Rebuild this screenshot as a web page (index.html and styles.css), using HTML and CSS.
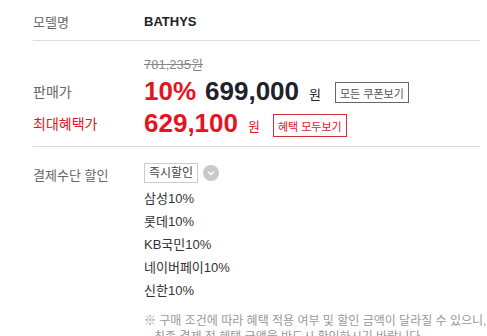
FILE: index.html
```html
<!DOCTYPE html>
<html lang="ko">
<head>
    <meta charset="UTF-8">
    <meta name="viewport" content="width=device-width, initial-scale=1.0">
    <title>상품 정보</title>
    <link rel="stylesheet" href="styles.css">
</head>
<body>
    <div class="info-container">
        <!-- 모델명 -->
        <div class="info-row model-row">
            <div class="info-label">모델명</div>
            <div class="info-value model-name">BATHYS</div>
        </div>

        <!-- 가격 정보 -->
        <div class="price-section">
            <div class="info-row">
                <div class="info-label"></div>
                <div class="info-value origin-price">781,235원</div>
            </div>
            <div class="info-row price-row">
                <div class="info-label">판매가</div>
                <div class="info-value">
                    <span class="rate">10%</span>
                    <span class="sale-price">699,000</span>
                    <span class="won">원</span>
                    <button class="outline-btn">모든 쿠폰보기</button>
                </div>
            </div>
            <div class="info-row price-row benefit-row">
                <div class="info-label">최대혜택가</div>
                <div class="info-value">
                    <span class="benefit-price">629,100</span>
                    <span class="won">원</span>
                    <button class="outline-btn red-btn">혜택 모두보기</button>
                </div>
            </div>
        </div>

        <!-- 결제수단 할인 -->
        <div class="pay-section">
            <div class="info-row">
                <div class="info-label">결제수단 할인</div>
                <div class="info-value">
                    <div class="pay-select">
                        <span class="pay-tag">즉시할인</span>
                        <span class="toggle-icon">
                            <svg width="16" height="16" viewBox="0 0 16 16">
                                <circle cx="8" cy="8" r="8" fill="#c9c9c9"/>
                                <path d="M5 6.8 L8 9.6 L11 6.8" fill="none" stroke="#fff" stroke-width="1.4"/>
                            </svg>
                        </span>
                    </div>
                    <ul class="card-list">
                        <li>삼성10%</li>
                        <li>롯데10%</li>
                        <li>KB국민10%</li>
                        <li>네이버페이10%</li>
                        <li>신한10%</li>
                    </ul>
                    <p class="notice">※ 구매 조건에 따라 혜택 적용 여부 및 할인 금액이 달라질 수 있으니,<br>&nbsp;&nbsp;&nbsp;최종 결제 전 혜택 금액을 반드시 확인하시기 바랍니다.</p>
                </div>
            </div>
        </div>
    </div>
</body>
</html>
```

FILE: styles.css
```css
body {
    font-family: "Liberation Sans", "Noto Sans CJK KR", sans-serif;
    background-color: #fff;
    margin: 0;
    color: #333;
    overflow: hidden;
}

.info-container {
    width: 447px;
    margin-left: 33px;
}

.info-row {
    display: flex;
    align-items: center;
}

.info-label {
    width: 111px;
    flex-shrink: 0;
    font-size: 13px;
    color: #666;
}

.info-value {
    flex: 1;
    font-size: 13px;
}

/* 모델명 */
.model-row {
    height: 41px;
    padding-top: 2px;
    box-sizing: border-box;
    border-bottom: 1px solid #ddd;
}

.model-name {
    font-weight: bold;
    color: #222;
    font-size: 13px;
}

/* 가격 */
.price-section {
    padding-top: 15px;
    height: 106px;
    box-sizing: border-box;
    border-bottom: 1px solid #ddd;
}

.origin-price {
    font-size: 13px;
    color: #888;
    text-decoration: line-through;
    line-height: 18px;
}

.price-row {
    height: 32px;
    margin-top: 1px;
}

.benefit-row {
    margin-top: 0;
}

.price-row .info-value {
    display: flex;
    align-items: center;
}

.rate, .sale-price, .benefit-price {
    font-size: 26px;
    font-weight: bold;
    line-height: 30px;
}

.rate {
    color: #e5141e;
    margin-right: 9px;
}

.sale-price {
    color: #1e222b;
}

.benefit-price {
    color: #e5141e;
}

.won {
    font-size: 13px;
    color: #222;
    margin: 4px 14px 0 10px;
}

.benefit-row .won {
    color: #e5141e;
    margin-right: 13px;
}

.benefit-row .info-label {
    color: #e5141e;
    font-size: 14px;
}

.price-row .info-label {
    font-size: 14px;
}

.outline-btn {
    font-family: inherit;
    font-size: 11px;
    color: #555;
    background: #fff;
    border: 1px solid #666;
    padding: 2px 4px;
    height: 21px;
    margin-top: 3px;
    cursor: pointer;
}

.red-btn {
    color: #e5141e;
    border-color: #d0303a;
    height: 23px;
    margin-top: 5px;
}

/* 결제수단 할인 */
.pay-section {
    padding-top: 16px;
}

.pay-section .info-row {
    align-items: flex-start;
}

.pay-section .info-label {
    font-size: 13px;
    margin-top: 2px;
}

.pay-select {
    display: flex;
    align-items: center;
    gap: 5px;
}

.pay-tag {
    font-size: 12px;
    color: #444;
    border: 1px solid #ccc;
    padding: 2px 4px;
    line-height: 14px;
}

.toggle-icon {
    display: flex;
}

.card-list {
    list-style: none;
    margin: 4px 0 0;
    padding: 0;
}

.card-list li {
    font-size: 13px;
    line-height: 23px;
    color: #333;
}

.notice {
    margin: 11px 0 0;
    font-size: 12px;
    color: #999;
    line-height: 16px;
    white-space: nowrap;
}
```
